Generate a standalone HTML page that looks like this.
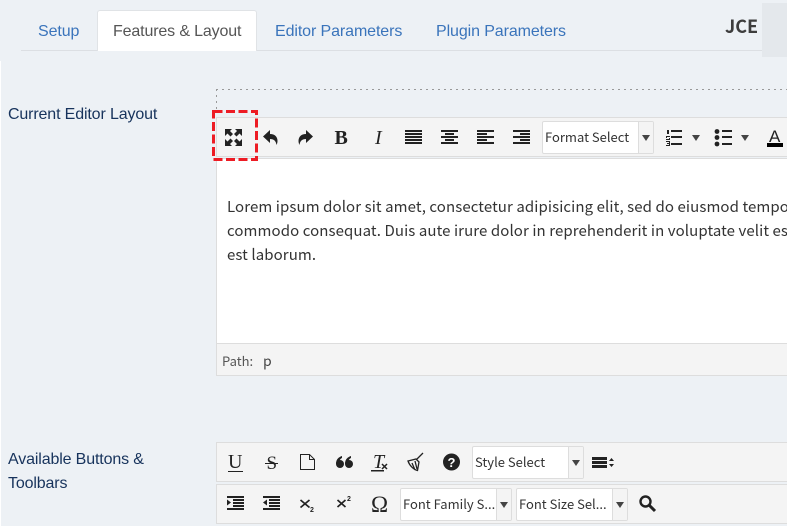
<!DOCTYPE html>
<html><head><meta charset="utf-8"><style>
html,body{margin:0;padding:0;width:787px;height:526px;overflow:hidden;background:#edf1f5}
body{position:relative;font-family:"Liberation Sans",sans-serif}
.a{position:absolute}
.t{position:absolute;white-space:nowrap;line-height:20px}
.tab{font-size:16px;color:#3a74bb;top:22px;letter-spacing:-.1px}
.bar{position:absolute;left:216px;width:571px;background:#f4f4f4;border:1px solid #ddd;border-right:0;box-sizing:border-box}
.sel{position:absolute;width:112px;height:33px;box-sizing:border-box;border:1px solid #ddd;border-radius:2px;background:#fff;font-family:"Noto Sans CJK JP",sans-serif;font-size:13px;line-height:30px;color:#333;padding-left:2px;white-space:nowrap;overflow:hidden}
.sel i{position:absolute;right:0;top:0;width:14px;height:31px;background:#f4f4f4;border-left:1px solid #ddd}
.sel i:after{content:"";position:absolute;left:3px;top:13px;border:4px solid transparent;border-top:6px solid #444;border-bottom:0}
svg{position:absolute;left:0;top:0}
.lbl{font-size:16px;color:#17335c;letter-spacing:-.14px}
.p{font-family:"Noto Sans CJK JP",sans-serif;font-size:15px;letter-spacing:.09px;color:#333;line-height:24px;white-space:nowrap;position:absolute;left:227px;width:560px;overflow:hidden}
</style></head><body>
<div class="a" style="left:0;top:61px;width:1px;height:465px;background:#fff"></div>
<div class="a" style="left:21px;top:50px;width:741px;height:1px;background:#dcdfe3"></div>
<div class="a" style="left:97px;top:10px;width:160px;height:41px;box-sizing:border-box;background:#fff;border:1px solid #e0e3e6;border-bottom:0;border-radius:3px 3px 0 0"></div>
<div class="t tab" style="left:38px">Setup</div>
<div class="t tab" style="left:113px;color:#555;letter-spacing:-.14px">Features &amp; Layout</div>
<div class="t tab" style="left:275px">Editor Parameters</div>
<div class="t tab" style="left:436px">Plugin Parameters</div>
<div class="t" style="left:725px;top:16px;font-size:18px;font-weight:bold;color:#3d3d3d;font-family:'Noto Sans CJK JP',sans-serif">JCE</div>
<div class="a" style="left:762px;top:3px;width:25px;height:54px;background:#e4e8ec"></div>
<div class="t lbl" style="left:8px;top:105px">Current Editor Layout</div>
<div class="t lbl" style="left:8px;top:448px;line-height:24px">Available Buttons &amp;<br>Toolbars</div>
<div class="a" style="left:216px;top:89px;width:571px;height:1px;background:repeating-linear-gradient(90deg,#999 0 2px,transparent 2px 6px)"></div>
<div class="a" style="left:216px;top:89px;width:1px;height:21px;background:repeating-linear-gradient(180deg,#999 0 2px,transparent 2px 6px)"></div>

<div class="bar" style="top:117px;height:40px"></div>
<div class="a" style="left:216px;top:158px;width:571px;height:186px;background:#fff;border-left:1px solid #ddd;border-top:1px solid #ddd;box-sizing:border-box"></div>
<div class="a" style="left:216px;top:343px;width:571px;height:33px;box-sizing:border-box;background:#f4f4f4;border:1px solid #ddd;border-right:0"></div>
<div class="p" style="top:195px">Lorem ipsum dolor sit amet, consectetur adipisicing elit, sed do eiusmod tempor incididunt ut labore</div>
<div class="p" style="top:219px">commodo consequat. Duis aute irure dolor in reprehenderit in voluptate velit esse cillum dolore</div>
<div class="p" style="top:243px">est laborum.</div>
<div class="t" style="left:222px;top:351px;font-size:13px;color:#555;font-family:'Noto Sans CJK JP',sans-serif">Path:</div>
<div class="t" style="left:263px;top:351px;font-size:14px;color:#444;font-family:'Noto Sans CJK JP',sans-serif">p</div>

<div class="bar" style="top:442px;height:40px"></div>
<div class="bar" style="top:484px;height:40px"></div>
<div class="sel" style="left:542px;top:121px">Format Select<i></i></div>
<div class="sel" style="left:472px;top:446px">Style Select<i></i></div>
<div class="sel" style="left:400px;top:488px">Font Family S...<i></i></div>
<div class="sel" style="left:516px;top:488px">Font Size Sel...<i></i></div>

<svg width="787" height="526" fill="#222" style="overflow:hidden">
<!-- toolbar 1 -->
<g transform="translate(225 129)"><path d="M0 0h7L5 2l3 3-2.500 2.500-3-3L0 7zM17 0v7l-2.500-2.500-3 3L9 5l3-3-2-2zM0 17v-7l2.500 2.500 3-3L8 12l-3 3 2 2zM17 17h-7l2-2-3-3 2.500-2.500 3 3L17 10z"/></g>
<path d="M270 130v4c5 0 7.500 3 7.500 7 0 1.500-.5 3-1 4-.5-4-2.500-6-6.500-6v4l-7-6.500z"/>
<path d="M306 130v4c-5 0-7.500 3-7.500 7 0 1.500.5 3 1 4 .5-4 2.500-6 6.500-6v4l7-6.500z"/>
<text x="334.500" y="144" font-family="Liberation Serif" font-weight="bold" font-size="20">B</text>
<text x="375" y="144" font-family="Liberation Serif" font-style="italic" font-size="20">I</text>
<path d="M405 130h17v2h-17zM405 133h17v2h-17zM405 136h17v2h-17zM405 139h17v2h-17zM405 142h17v2h-17z"/>
<path d="M441 130h17v2h-17zM445 133h9v2h-9zM441 136h17v2h-17zM445 139h9v2h-9zM441 142h17v2h-17z"/>
<path d="M477 130h17v2h-17zM477 133h10v2h-10zM477 136h17v2h-17zM477 139h10v2h-10zM477 142h17v2h-17z"/>
<path d="M513 130h17v2h-17zM520 133h10v2h-10zM513 136h17v2h-17zM520 139h10v2h-10zM513 142h17v2h-17z"/>
<path d="M671 130h11v2h-11zM671 136h11v2h-11zM671 143h11v2h-11zM667 130h2v4h-2zM666 136h4v1h-3v1h3v2h-4v-1h3v-1h-3zM666 141h4v5h-4v-1h3v-1h-2v-1h2v-1h-3z"/>
<path d="M692 135h8l-4 6z" fill="#444"/>
<circle cx="717" cy="131.500" r="2.400"/><circle cx="717" cy="137.500" r="2.400"/><circle cx="717" cy="144" r="2.400"/>
<path d="M722 130h10v2h-10zM722 136h10v2h-10zM722 143h10v2h-10z"/>
<path d="M741 135h8l-4 6z" fill="#444"/>
<text x="769" y="142" font-family="Liberation Sans" font-size="17">A</text>
<path d="M767 143h16v4h-16z" fill="#000"/>
<!-- toolbar 2 -->
<text x="228" y="468" font-family="Liberation Serif" font-size="20">U</text>
<path d="M228 471h15v1h-15z"/>
<text x="266.500" y="469" font-family="Liberation Serif" font-size="19">S</text>
<path d="M265 463h13v1h-13z"/>
<path d="M300.500 454.500h9l5 5v10h-14zM309.500 454.500v5h5" fill="none" stroke="#222"/>
<circle cx="340" cy="464" r="4"/><circle cx="349" cy="464" r="4"/>
<path d="M336 464c0-5 3-7 6-8v2c-2 1-3 3-2.500 5zM345 464c0-5 3-7 6-8v2c-2 1-3 3-2.500 5z"/>
<text x="373" y="468" font-family="Liberation Serif" font-style="italic" font-size="20">T</text>
<path d="M371 470h13v1.500h-13z"/>
<path d="M382 464l5 5M387 464l-5 5" stroke="#222" stroke-width="1.500"/>
<path d="M408 461l8-2 3 3-1.500 8.500c-4-1-8-5-9.500-9.500zM417 459l6-6M412 463l3 7M415 461l2 8" fill="none" stroke="#222" stroke-width="1.300"/>
<circle cx="451.500" cy="462" r="8.500"/>
<text x="451.500" y="467" text-anchor="middle" font-family="Liberation Sans" font-weight="bold" font-size="13" fill="#fff">?</text>
<path d="M592 457h15v3h-15zM592 461h15v3h-15zM592 465h15v3h-15zM609 461l2.500-3 2.500 3zM609 464l2.500 3 2.500-3z"/>
<!-- toolbar 3 -->
<path d="M227 496h17v2h-17zM233 499h11v2h-11zM233 502h11v2h-11zM233 505h11v2h-11zM227 508h17v2h-17zM227 499.500l4 3-4 3z"/>
<path d="M263 496h17v2h-17zM269 499h11v2h-11zM269 502h11v2h-11zM269 505h11v2h-11zM263 508h17v2h-17zM267 499.500l-4 3 4 3z"/>
<path d="M300.500 500l9 7.500M309.500 500l-9 7.500M337.500 500l8 7M345.500 500l-8 7" stroke="#222" stroke-width="1.700" fill="none"/>
<text x="310" y="512" font-family="Liberation Sans" font-weight="bold" font-size="7">2</text>
<text x="347" y="501" font-family="Liberation Sans" font-weight="bold" font-size="7">2</text>
<text x="371" y="512" font-family="Liberation Serif" font-size="23">Ω</text>
<circle cx="645.500" cy="501.500" r="5" fill="none" stroke="#222" stroke-width="2.400"/>
<path d="M649 505l6 6" stroke="#222" stroke-width="3"/>
<!-- red highlight -->
<rect x="213.500" y="111.500" width="43" height="48" fill="none" stroke="#ed1c24" stroke-width="3" stroke-dasharray="9 3.500"/>
</svg>
</body></html>
